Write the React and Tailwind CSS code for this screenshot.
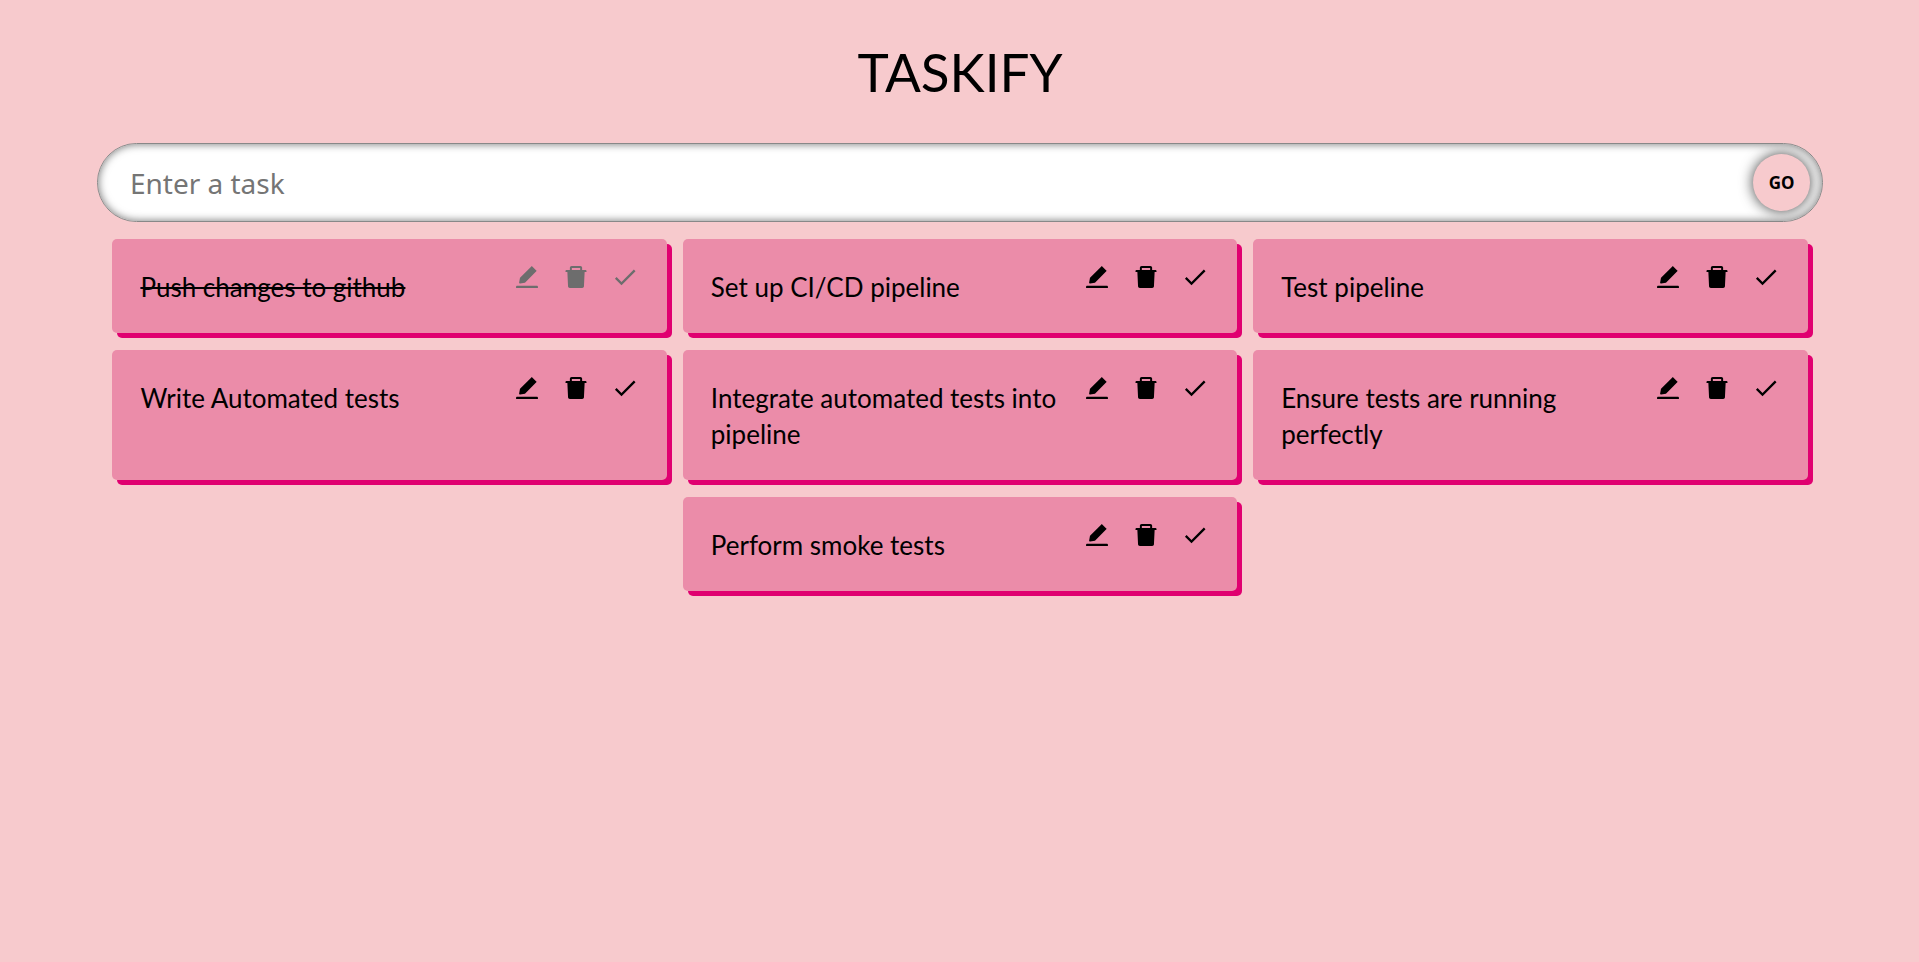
import { AiFillDelete, AiFillEdit } from "react-icons/ai";
import { MdDone } from "react-icons/md";

const tasks = [
  { text: "Push changes to github", done: true },
  { text: "Set up CI/CD pipeline" },
  { text: "Test pipeline" },
  { text: "Write Automated tests" },
  { text: "Integrate automated tests into pipeline" },
  { text: "Ensure tests are running perfectly" },
  { text: "Perform smoke tests" },
];

function TaskCard({ text, done }) {
  return (
    <li className="flex basis-[calc((100%-32px)/3)] items-start gap-5 rounded-[5px] bg-[#eb8ca9] px-7 pt-6 pb-7 shadow-[5px_5px_0_#e00070]">
      <span className={done ? "grow pt-1.5 line-through" : "grow pt-1.5"}>{text}</span>
      <div className={done ? "flex shrink-0 gap-[21px] text-[#6d6d6d]" : "flex shrink-0 gap-[21px]"}>
        <button type="button" aria-label="Edit" disabled={done}><AiFillEdit size={28} /></button>
        <button type="button" aria-label="Delete" disabled={done}><AiFillDelete size={28} /></button>
        <button type="button" aria-label="Done" disabled={done}><MdDone size={28} /></button>
      </div>
    </li>
  );
}

export default function App() {
  return (
    <main className="flex min-h-screen flex-col items-center bg-[#f7cacd] pl-px font-['Lato',sans-serif] text-black">
      <h1 className="pt-8 pb-8 text-[53px] leading-[79px]">TASKIFY</h1>
      <form className="flex h-[79px] w-9/10 items-center overflow-hidden rounded-full border border-[#888888] bg-white pr-3 shadow-[inset_0_0_8px_#707070]" onSubmit={(e) => e.preventDefault()}>
        <input
          aria-label="Enter a task"
          placeholder="Enter a task"
          className="h-full min-w-0 grow bg-transparent pl-8 font-['Noto_Sans',sans-serif] text-[28px] outline-none placeholder:text-[#757575]"
        />
        <button className="size-[57px] shrink-0 rounded-full bg-[#f7cacd] font-['Noto_Sans',sans-serif] text-[17px] font-bold shadow-[0_0_14px_#404040]">GO</button>
      </form>
      <ul className="mt-[17px] flex w-[calc(90%-31px)] flex-wrap justify-center gap-x-4 gap-y-[17px] text-[26px] leading-[36px]">
        {tasks.map((task) => <TaskCard key={task.text} {...task} />)}
      </ul>
    </main>
  );
}
